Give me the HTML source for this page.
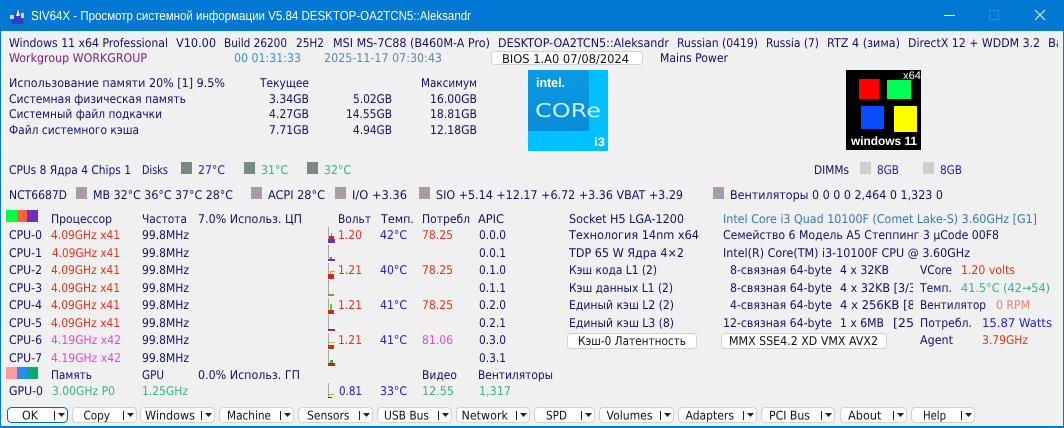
<!DOCTYPE html>
<html><head><meta charset="utf-8"><title>SIV64X</title>
<style>
html,body{margin:0;padding:0;background:#f0f0f0;width:1064px;height:428px;overflow:hidden}
svg{display:block}
text{font-family:"DejaVu Sans","Liberation Sans",sans-serif;font-size:12px;fill:#10106c;text-rendering:geometricPrecision}
.w{fill:#fff;font-family:"Liberation Sans",sans-serif;font-size:13px}
.p{fill:#7a1f80}.c{fill:#3a90d8}.d{fill:#5f86a8}.b{fill:#2020c4}.g{fill:#34b488}.r{fill:#e0341c}.m{fill:#e44cc4}.i{fill:#3478b4}.o{fill:#f08070}
.t{fill:#111}
.btn{fill:#fff;stroke:#d0d0d0}
</style></head><body>
<svg xmlns="http://www.w3.org/2000/svg" width="1064" height="428" viewBox="0 0 1064 428">
<defs>
<clipPath id="c1"><rect x="0" y="36" width="1058" height="20"/></clipPath>
<clipPath id="c2"><rect x="835" y="280" width="78" height="52"/></clipPath>
<linearGradient id="ig" x1="0" y1="0" x2="0" y2="1"><stop offset="0" stop-color="#0a9be2"/><stop offset="1" stop-color="#0a8cd8"/></linearGradient>
</defs>
<rect width="1064" height="428" fill="#f0f0f0"/>
<rect width="1064" height="31" fill="#0078d4"/>
<rect x="0" y="31" width="1" height="397" fill="#0078d4"/>
<rect x="1063" y="31" width="1" height="397" fill="#0078d4"/>
<rect x="0" y="426" width="1064" height="2" fill="#0078d4"/>

<polygon points="17,24 11,24 13,17 18,9 22,17 24,24" fill="#3a3ac0"/>
<polygon points="18,9 20,16 16,16" fill="#e8e8f4"/>
<rect x="10" y="15" width="4" height="4" fill="#c8d4e8"/>
<rect x="21" y="13" width="3" height="5" fill="#d0d8ea"/>
<text class="w" x="31" y="20" textLength="440" lengthAdjust="spacingAndGlyphs">SIV64X - Просмотр системной информации V5.84 DESKTOP-OA2TCN5::Aleksandr</text>
<rect x="944" y="15" width="11" height="1" fill="#fff"/>
<rect x="989.5" y="10.5" width="9" height="9" fill="none" stroke="#2a8ee0"/>
<path d="M1035 10L1045 20M1045 10L1035 20" stroke="#fff" stroke-width="1" fill="none"/>

<g clip-path="url(#c1)">
<text x="9" y="47" textLength="159" lengthAdjust="spacingAndGlyphs">Windows 11 x64 Professional</text>
<text x="176" y="47" textLength="40" lengthAdjust="spacingAndGlyphs">V10.00</text>
<text x="224" y="47" textLength="63" lengthAdjust="spacingAndGlyphs">Build 26200</text>
<text x="296" y="47" textLength="28" lengthAdjust="spacingAndGlyphs">25H2</text>
<text x="333" y="47" textLength="157" lengthAdjust="spacingAndGlyphs">MSI MS-7C88 (B460M-A Pro)</text>
<text x="498" y="47" textLength="171" lengthAdjust="spacingAndGlyphs">DESKTOP-OA2TCN5::Aleksandr</text>
<text x="677" y="47" textLength="81" lengthAdjust="spacingAndGlyphs">Russian (0419)</text>
<text x="766" y="47" textLength="53" lengthAdjust="spacingAndGlyphs">Russia (7)</text>
<text x="827" y="47" textLength="73" lengthAdjust="spacingAndGlyphs">RTZ 4 (зима)</text>
<text x="908" y="47" textLength="132" lengthAdjust="spacingAndGlyphs">DirectX 12 + WDDM 3.2</text>
<text x="1048" y="47" textLength="15" lengthAdjust="spacingAndGlyphs">Ba</text>
</g>
<text class="p" x="9" y="62" textLength="138" lengthAdjust="spacingAndGlyphs">Workgroup WORKGROUP</text>
<text class="c" x="234" y="62" textLength="67" lengthAdjust="spacingAndGlyphs">00 01:31:33</text>
<text class="d" x="324" y="62" textLength="118" lengthAdjust="spacingAndGlyphs">2025-11-17 07:30:43</text>
<rect class="btn" x="491.5" y="51.5" width="151" height="13" rx="3"/>
<text class="t" x="502" y="63" textLength="127" lengthAdjust="spacingAndGlyphs">BIOS 1.A0 07/08/2024</text>
<text x="660" y="62" textLength="68" lengthAdjust="spacingAndGlyphs">Mains Power</text>

<text x="9" y="87" textLength="216" lengthAdjust="spacingAndGlyphs">Использование памяти 20% [1] 9.5%</text>
<text x="260" y="87" textLength="49" lengthAdjust="spacingAndGlyphs">Текущее</text>
<text x="421" y="87" textLength="56" lengthAdjust="spacingAndGlyphs">Максимум</text>
<text x="9" y="103" textLength="177" lengthAdjust="spacingAndGlyphs">Системная физическая память</text>
<text x="269" y="103" textLength="40" lengthAdjust="spacingAndGlyphs">3.34GB</text>
<text x="353" y="103" textLength="39" lengthAdjust="spacingAndGlyphs">5.02GB</text>
<text x="430" y="103" textLength="47" lengthAdjust="spacingAndGlyphs">16.00GB</text>
<text x="9" y="118" textLength="153" lengthAdjust="spacingAndGlyphs">Системный файл подкачки</text>
<text x="269" y="118" textLength="40" lengthAdjust="spacingAndGlyphs">4.27GB</text>
<text x="346" y="118" textLength="46" lengthAdjust="spacingAndGlyphs">14.55GB</text>
<text x="430" y="118" textLength="47" lengthAdjust="spacingAndGlyphs">18.81GB</text>
<text x="9" y="134" textLength="130" lengthAdjust="spacingAndGlyphs">Файл системного кэша</text>
<text x="269" y="134" textLength="40" lengthAdjust="spacingAndGlyphs">7.71GB</text>
<text x="353" y="134" textLength="39" lengthAdjust="spacingAndGlyphs">4.94GB</text>
<text x="430" y="134" textLength="47" lengthAdjust="spacingAndGlyphs">12.18GB</text>

<!-- Intel logo -->
<rect x="528" y="70" width="80" height="81" fill="#00c0ff"/>
<rect x="528" y="70" width="61" height="61" fill="url(#ig)"/>
<text x="536" y="87" textLength="29" lengthAdjust="spacingAndGlyphs" style="fill:#fff;font-family:'Liberation Sans',sans-serif;font-size:13px;font-weight:bold">intel.</text>
<text x="535" y="117" textLength="66" lengthAdjust="spacingAndGlyphs" style="fill:#c8f4ff;font-family:'DejaVu Sans',sans-serif;font-size:19px;font-weight:normal">CORe</text>
<text x="594" y="146" textLength="11" lengthAdjust="spacingAndGlyphs" style="fill:#fff;font-family:'Liberation Sans',sans-serif;font-size:12px;font-weight:bold">i3</text>

<!-- Windows 11 logo -->
<rect x="846" y="70" width="75" height="80" fill="#000"/>
<rect x="859" y="79" width="20" height="20" fill="#ff0000"/>
<rect x="887" y="80" width="24" height="19" fill="#00ff55"/>
<rect x="861" y="106" width="23" height="23" fill="#0a4cff"/>
<rect x="894" y="106" width="23" height="26" fill="#ffff00"/>
<text x="903" y="79" textLength="18" lengthAdjust="spacingAndGlyphs" style="fill:#fff;font-size:11px;font-family:'Liberation Sans',sans-serif">x64</text>
<text x="851" y="145" textLength="66" lengthAdjust="spacingAndGlyphs" style="fill:#fff;font-size:12px;font-weight:bold;font-family:'Liberation Sans',sans-serif">windows 11</text>

<!-- Disks row -->
<text x="9" y="174" textLength="122" lengthAdjust="spacingAndGlyphs">CPUs 8 Ядра 4 Chips 1</text>
<text x="142" y="174" textLength="26" lengthAdjust="spacingAndGlyphs">Disks</text>
<rect x="181" y="162" width="11" height="12" fill="#7a8a80"/>
<text class="b" x="198" y="174" textLength="27" lengthAdjust="spacingAndGlyphs">27°C</text>
<rect x="244" y="162" width="11" height="12" fill="#7a8a80"/>
<text class="g" x="261" y="174" textLength="27" lengthAdjust="spacingAndGlyphs">31°C</text>
<rect x="307" y="162" width="11" height="12" fill="#7a8a80"/>
<text class="g" x="324" y="174" textLength="27" lengthAdjust="spacingAndGlyphs">32°C</text>
<text x="814" y="174" textLength="35" lengthAdjust="spacingAndGlyphs">DIMMs</text>
<rect x="860" y="162" width="11" height="12" fill="#cfcfcf"/>
<text class="b" x="877" y="174" textLength="22" lengthAdjust="spacingAndGlyphs">8GB</text>
<rect x="923" y="162" width="11" height="12" fill="#cfcfcf"/>
<text class="b" x="940" y="174" textLength="22" lengthAdjust="spacingAndGlyphs">8GB</text>

<!-- Sensor row -->
<text x="9" y="199" textLength="58" lengthAdjust="spacingAndGlyphs">NCT6687D</text>
<rect x="76" y="187" width="11" height="12" fill="#a89aa8"/>
<text x="93" y="199" textLength="140" lengthAdjust="spacingAndGlyphs">MB 32°C 36°C 37°C 28°C</text>
<rect x="251" y="187" width="11" height="12" fill="#a89aa8"/>
<text x="268" y="199" textLength="57" lengthAdjust="spacingAndGlyphs">ACPI 28°C</text>
<rect x="335" y="187" width="11" height="12" fill="#a89aa8"/>
<text x="352" y="199" textLength="55" lengthAdjust="spacingAndGlyphs">I/O +3.36</text>
<rect x="419" y="187" width="11" height="12" fill="#a89aa8"/>
<text x="436" y="199" textLength="247" lengthAdjust="spacingAndGlyphs">SIO +5.14 +12.17 +6.72 +3.36 VBAT +3.29</text>
<rect x="713" y="187" width="11" height="12" fill="#a89aa8"/>
<text x="730" y="199" textLength="213" lengthAdjust="spacingAndGlyphs">Вентиляторы 0 0 0 0 2,464 0 1,323 0</text>

<!-- Colour blocks -->
<rect x="6" y="210" width="11" height="12" fill="#00ff40"/>
<rect x="17" y="210" width="10" height="12" fill="#ff6040"/>
<rect x="27" y="210" width="11" height="12" fill="#6a30c0"/>
<rect x="6" y="367" width="11" height="12" fill="#ff9aa0"/>
<rect x="17" y="367" width="10" height="12" fill="#2a8cf0"/>
<rect x="27" y="367" width="11" height="12" fill="#10a870"/>

<!-- Header -->
<text x="51" y="223" textLength="61" lengthAdjust="spacingAndGlyphs">Процессор</text>
<text x="142" y="223" textLength="45" lengthAdjust="spacingAndGlyphs">Частота</text>
<text x="198" y="223" textLength="104" lengthAdjust="spacingAndGlyphs">7.0% Использ. ЦП</text>
<text x="338" y="223" textLength="33" lengthAdjust="spacingAndGlyphs">Вольт</text>
<text x="381" y="223" textLength="33" lengthAdjust="spacingAndGlyphs">Темп.</text>
<text x="422" y="223" textLength="48" lengthAdjust="spacingAndGlyphs">Потребл</text>
<text x="478" y="223" textLength="26" lengthAdjust="spacingAndGlyphs">APIC</text>

<!-- CPU rows -->
<text x="9" y="239" textLength="33" lengthAdjust="spacingAndGlyphs">CPU-0</text><text class="r" x="51" y="239" textLength="69" lengthAdjust="spacingAndGlyphs">4.09GHz x41</text><text x="142" y="239" textLength="47" lengthAdjust="spacingAndGlyphs">99.8MHz</text>
<text x="9" y="257" textLength="33" lengthAdjust="spacingAndGlyphs">CPU-1</text><text class="r" x="52" y="257" textLength="68" lengthAdjust="spacingAndGlyphs">4.09GHz x41</text><text x="142" y="257" textLength="47" lengthAdjust="spacingAndGlyphs">99.8MHz</text>
<text x="9" y="274" textLength="33" lengthAdjust="spacingAndGlyphs">CPU-2</text><text class="r" x="51" y="274" textLength="69" lengthAdjust="spacingAndGlyphs">4.09GHz x41</text><text x="142" y="274" textLength="47" lengthAdjust="spacingAndGlyphs">99.8MHz</text>
<text x="9" y="292" textLength="33" lengthAdjust="spacingAndGlyphs">CPU-3</text><text class="r" x="51" y="292" textLength="69" lengthAdjust="spacingAndGlyphs">4.09GHz x41</text><text x="142" y="292" textLength="47" lengthAdjust="spacingAndGlyphs">99.8MHz</text>
<text x="9" y="309" textLength="33" lengthAdjust="spacingAndGlyphs">CPU-4</text><text class="r" x="51" y="309" textLength="69" lengthAdjust="spacingAndGlyphs">4.09GHz x41</text><text x="142" y="309" textLength="47" lengthAdjust="spacingAndGlyphs">99.8MHz</text>
<text x="9" y="327" textLength="33" lengthAdjust="spacingAndGlyphs">CPU-5</text><text class="r" x="51" y="327" textLength="69" lengthAdjust="spacingAndGlyphs">4.09GHz x41</text><text x="142" y="327" textLength="47" lengthAdjust="spacingAndGlyphs">99.8MHz</text>
<text x="9" y="344" textLength="33" lengthAdjust="spacingAndGlyphs">CPU-6</text><text class="m" x="51" y="344" textLength="70" lengthAdjust="spacingAndGlyphs">4.19GHz x42</text><text x="142" y="344" textLength="47" lengthAdjust="spacingAndGlyphs">99.8MHz</text>
<text x="9" y="362" textLength="33" lengthAdjust="spacingAndGlyphs">CPU-7</text><text class="m" x="51" y="362" textLength="70" lengthAdjust="spacingAndGlyphs">4.19GHz x42</text><text x="142" y="362" textLength="47" lengthAdjust="spacingAndGlyphs">99.8MHz</text>

<text class="r" x="338" y="239" textLength="24" lengthAdjust="spacingAndGlyphs">1.20</text><text class="b" x="380" y="239" textLength="27" lengthAdjust="spacingAndGlyphs">42°C</text><text class="r" x="422" y="239" textLength="31" lengthAdjust="spacingAndGlyphs">78.25</text><text x="479" y="239" textLength="27" lengthAdjust="spacingAndGlyphs">0.0.0</text>
<text x="479" y="257" textLength="27" lengthAdjust="spacingAndGlyphs">0.0.1</text>
<text class="r" x="338" y="274" textLength="24" lengthAdjust="spacingAndGlyphs">1.21</text><text class="b" x="380" y="274" textLength="27" lengthAdjust="spacingAndGlyphs">40°C</text><text class="r" x="422" y="274" textLength="31" lengthAdjust="spacingAndGlyphs">78.25</text><text x="479" y="274" textLength="27" lengthAdjust="spacingAndGlyphs">0.1.0</text>
<text x="479" y="292" textLength="27" lengthAdjust="spacingAndGlyphs">0.1.1</text>
<text class="r" x="338" y="309" textLength="24" lengthAdjust="spacingAndGlyphs">1.21</text><text class="b" x="380" y="309" textLength="27" lengthAdjust="spacingAndGlyphs">41°C</text><text class="r" x="422" y="309" textLength="31" lengthAdjust="spacingAndGlyphs">78.25</text><text x="479" y="309" textLength="27" lengthAdjust="spacingAndGlyphs">0.2.0</text>
<text x="479" y="327" textLength="27" lengthAdjust="spacingAndGlyphs">0.2.1</text>
<text class="r" x="338" y="344" textLength="24" lengthAdjust="spacingAndGlyphs">1.21</text><text class="b" x="380" y="344" textLength="27" lengthAdjust="spacingAndGlyphs">41°C</text><text class="m" x="422" y="344" textLength="31" lengthAdjust="spacingAndGlyphs">81.06</text><text x="479" y="344" textLength="27" lengthAdjust="spacingAndGlyphs">0.3.0</text>
<text x="479" y="362" textLength="27" lengthAdjust="spacingAndGlyphs">0.3.1</text>

<text x="51" y="379" textLength="41" lengthAdjust="spacingAndGlyphs">Память</text>
<text x="142" y="379" textLength="22" lengthAdjust="spacingAndGlyphs">GPU</text>
<text x="198" y="379" textLength="102" lengthAdjust="spacingAndGlyphs">0.0% Использ. ГП</text>
<text x="422" y="379" textLength="35" lengthAdjust="spacingAndGlyphs">Видео</text>
<text x="478" y="379" textLength="75" lengthAdjust="spacingAndGlyphs">Вентиляторы</text>

<text x="9" y="395" textLength="34" lengthAdjust="spacingAndGlyphs">GPU-0</text>
<text class="g" x="52" y="395" textLength="63" lengthAdjust="spacingAndGlyphs">3.00GHz P0</text>
<text class="g" x="142" y="395" textLength="46" lengthAdjust="spacingAndGlyphs">1.25GHz</text>
<text class="b" x="339" y="395" textLength="23" lengthAdjust="spacingAndGlyphs">0.81</text>
<text class="b" x="380" y="395" textLength="27" lengthAdjust="spacingAndGlyphs">33°C</text>
<text class="g" x="422" y="395" textLength="32" lengthAdjust="spacingAndGlyphs">12.55</text>
<text class="g" x="479" y="395" textLength="32" lengthAdjust="spacingAndGlyphs">1,317</text>

<!-- Mini graphs -->
<g fill="#a8a8a8">
<rect x="328" y="227" width="1" height="16"/><rect x="328" y="245" width="1" height="16"/><rect x="328" y="263" width="1" height="16"/><rect x="328" y="280" width="1" height="16"/><rect x="328" y="298" width="1" height="16"/><rect x="328" y="315" width="1" height="16"/><rect x="328" y="333" width="1" height="16"/><rect x="328" y="350" width="1" height="16"/><rect x="328" y="383" width="1" height="15"/>
</g>
<rect x="328" y="239" width="7" height="4" fill="#6a30c0"/><rect x="329" y="236" width="5" height="3" fill="#d02a20"/><rect x="331" y="233" width="1" height="3" fill="#40c040"/>
<rect x="328" y="259" width="7" height="2" fill="#6a30c0"/><rect x="330" y="257" width="2" height="2" fill="#a060a0"/>
<rect x="328" y="274" width="6" height="5" fill="#d02a20"/><rect x="330" y="271" width="5" height="1" fill="#e8a040"/><rect x="330" y="272" width="1" height="2" fill="#e8a040"/>
<rect x="328" y="294" width="6" height="2" fill="#c08030"/>
<rect x="328" y="310" width="6" height="4" fill="#d02a20"/><rect x="330" y="304" width="2" height="6" fill="#70c040"/>
<rect x="328" y="329" width="7" height="2" fill="#8a2090"/>
<rect x="328" y="345" width="6" height="4" fill="#c83020"/><rect x="329" y="342" width="6" height="1" fill="#e8a040"/>
<rect x="328" y="363" width="7" height="3" fill="#c81e20"/><rect x="330" y="360" width="3" height="3" fill="#40b040"/>
<rect x="328" y="394" width="6" height="1" fill="#e8983a"/><rect x="328" y="397" width="4" height="1" fill="#2a2ac0"/>

<!-- Right columns -->
<text x="569" y="223" textLength="115" lengthAdjust="spacingAndGlyphs">Socket H5 LGA-1200</text>
<text x="569" y="239" textLength="130" lengthAdjust="spacingAndGlyphs">Технология 14nm  x64</text>
<text x="569" y="257" textLength="115" lengthAdjust="spacingAndGlyphs">TDP 65 W Ядра 4×2</text>
<text x="569" y="274" textLength="88" lengthAdjust="spacingAndGlyphs">Кэш кода L1 (2)</text>
<text x="569" y="292" textLength="104" lengthAdjust="spacingAndGlyphs">Кэш данных L1 (2)</text>
<text x="569" y="309" textLength="105" lengthAdjust="spacingAndGlyphs">Единый кэш L2 (2)</text>
<text x="569" y="327" textLength="105" lengthAdjust="spacingAndGlyphs">Единый кэш L3 (8)</text>

<text class="i" x="723" y="223" textLength="314" lengthAdjust="spacingAndGlyphs">Intel Core i3 Quad 10100F (Comet Lake-S) 3.60GHz [G1]</text>
<text x="723" y="239" textLength="276" lengthAdjust="spacingAndGlyphs">Семейство 6 Модель A5 Степпинг 3 µCode 00F8</text>
<text x="723" y="257" textLength="247" lengthAdjust="spacingAndGlyphs">Intel(R) Core(TM) i3-10100F CPU @ 3.60GHz</text>
<text x="730" y="274" textLength="102" lengthAdjust="spacingAndGlyphs">8-связная 64-byte</text>
<text x="840" y="274" textLength="49" lengthAdjust="spacingAndGlyphs">4 x 32KB</text>
<text x="730" y="292" textLength="102" lengthAdjust="spacingAndGlyphs">8-связная 64-byte</text>
<text x="730" y="309" textLength="102" lengthAdjust="spacingAndGlyphs">4-связная 64-byte</text>
<text x="723" y="327" textLength="109" lengthAdjust="spacingAndGlyphs">12-связная 64-byte</text>
<g clip-path="url(#c2)">
<text x="840" y="292" textLength="76" lengthAdjust="spacingAndGlyphs">4 x 32KB [3/3</text>
<text x="840" y="309" textLength="75" lengthAdjust="spacingAndGlyphs">4 x 256KB [8</text>
<text x="840" y="327" textLength="44" lengthAdjust="spacingAndGlyphs">1 x 6MB</text>
<text x="893" y="327" textLength="21" lengthAdjust="spacingAndGlyphs">[25</text>
</g>
<text x="920" y="274" textLength="32" lengthAdjust="spacingAndGlyphs">VCore</text>
<text class="r" x="961" y="274" textLength="54" lengthAdjust="spacingAndGlyphs">1.20 volts</text>
<text x="920" y="292" textLength="32" lengthAdjust="spacingAndGlyphs">Темп.</text>
<text class="g" x="961" y="292" textLength="89" lengthAdjust="spacingAndGlyphs">41.5°C (42→54)</text>
<text x="920" y="309" textLength="66" lengthAdjust="spacingAndGlyphs">Вентилятор</text>
<text class="o" x="996" y="309" textLength="34" lengthAdjust="spacingAndGlyphs">0 RPM</text>
<text x="920" y="327" textLength="52" lengthAdjust="spacingAndGlyphs">Потребл.</text>
<text class="b" x="982" y="327" textLength="70" lengthAdjust="spacingAndGlyphs">15.87 Watts</text>
<text x="920" y="344" textLength="33" lengthAdjust="spacingAndGlyphs">Agent</text>
<text class="r" x="982" y="344" textLength="46" lengthAdjust="spacingAndGlyphs">3.79GHz</text>

<rect class="btn" x="567.5" y="333.5" width="129" height="15" rx="3"/>
<text class="t" x="578" y="345" textLength="108" lengthAdjust="spacingAndGlyphs">Кэш-0 Латентность</text>
<rect class="btn" x="721.5" y="333.5" width="165" height="15" rx="3"/>
<text class="t" x="729" y="345" textLength="149" lengthAdjust="spacingAndGlyphs">MMX SSE4.2 XD VMX AVX2</text>

<!-- Toolbar -->
<g>
<rect x="7.5" y="407.5" width="60" height="15" rx="4" fill="#fff" stroke="#0067c0"/>
<text class="t" x="22" y="419.500" textLength="16" lengthAdjust="spacingAndGlyphs">OK</text><rect x="54" y="411" width="1" height="9" fill="#222"/><path d="M58 413h7l-3.500 4z" fill="#222"/>
<rect class="btn" x="72.500" y="407.500" width="64" height="15" rx="4"/>
<text class="t" x="83.500" y="419.500" textLength="26.500" lengthAdjust="spacingAndGlyphs">Copy</text><rect x="123" y="411" width="1" height="9" fill="#222"/><path d="M127 413h7l-3.500 4z" fill="#222"/>
<rect class="btn" x="140.500" y="407.500" width="74" height="15" rx="4"/>
<text class="t" x="145" y="419.500" textLength="50" lengthAdjust="spacingAndGlyphs">Windows</text><rect x="201" y="411" width="1" height="9" fill="#222"/><path d="M205 413h7l-3.500 4z" fill="#222"/>
<rect class="btn" x="219.500" y="407.500" width="74" height="15" rx="4"/>
<text class="t" x="227" y="419.500" textLength="44" lengthAdjust="spacingAndGlyphs">Machine</text><rect x="280" y="411" width="1" height="9" fill="#222"/><path d="M284 413h7l-3.500 4z" fill="#222"/>
<rect class="btn" x="298.500" y="407.500" width="74" height="15" rx="4"/>
<text class="t" x="307" y="419.500" textLength="42.500" lengthAdjust="spacingAndGlyphs">Sensors</text><rect x="359" y="411" width="1" height="9" fill="#222"/><path d="M363 413h7l-3.500 4z" fill="#222"/>
<rect class="btn" x="377.500" y="407.500" width="74" height="15" rx="4"/>
<text class="t" x="384" y="419.500" textLength="45" lengthAdjust="spacingAndGlyphs">USB Bus</text><rect x="438" y="411" width="1" height="9" fill="#222"/><path d="M442 413h7l-3.500 4z" fill="#222"/>
<rect class="btn" x="456.500" y="407.500" width="73" height="15" rx="4"/>
<text class="t" x="461.500" y="419.500" textLength="46.500" lengthAdjust="spacingAndGlyphs">Network</text><rect x="516" y="411" width="1" height="9" fill="#222"/><path d="M520 413h7l-3.500 4z" fill="#222"/>
<rect class="btn" x="534.500" y="407.500" width="60" height="15" rx="4"/>
<text class="t" x="546" y="419.500" textLength="21" lengthAdjust="spacingAndGlyphs">SPD</text><rect x="581" y="411" width="1" height="9" fill="#222"/><path d="M585 413h7l-3.500 4z" fill="#222"/>
<rect class="btn" x="599.500" y="407.500" width="74" height="15" rx="4"/>
<text class="t" x="606.500" y="419.500" textLength="46" lengthAdjust="spacingAndGlyphs">Volumes</text><rect x="660" y="411" width="1" height="9" fill="#222"/><path d="M664 413h7l-3.500 4z" fill="#222"/>
<rect class="btn" x="678.500" y="407.500" width="78" height="15" rx="4"/>
<text class="t" x="685.500" y="419.500" textLength="48.500" lengthAdjust="spacingAndGlyphs">Adapters</text><rect x="743" y="411" width="1" height="9" fill="#222"/><path d="M747 413h7l-3.500 4z" fill="#222"/>
<rect class="btn" x="761.500" y="407.500" width="73" height="15" rx="4"/>
<text class="t" x="769" y="419.500" textLength="41" lengthAdjust="spacingAndGlyphs">PCI Bus</text><rect x="821" y="411" width="1" height="9" fill="#222"/><path d="M825 413h7l-3.500 4z" fill="#222"/>
<rect class="btn" x="840.500" y="407.500" width="66" height="15" rx="4"/>
<text class="t" x="848" y="419.500" textLength="33.500" lengthAdjust="spacingAndGlyphs">About</text><rect x="893" y="411" width="1" height="9" fill="#222"/><path d="M897 413h7l-3.500 4z" fill="#222"/>
<rect class="btn" x="911.500" y="407.500" width="63" height="15" rx="4"/>
<text class="t" x="923" y="419.500" textLength="23" lengthAdjust="spacingAndGlyphs">Help</text><rect x="961" y="411" width="1" height="9" fill="#222"/><path d="M965 413h7l-3.500 4z" fill="#222"/>
</g>
</svg>
</body></html>
